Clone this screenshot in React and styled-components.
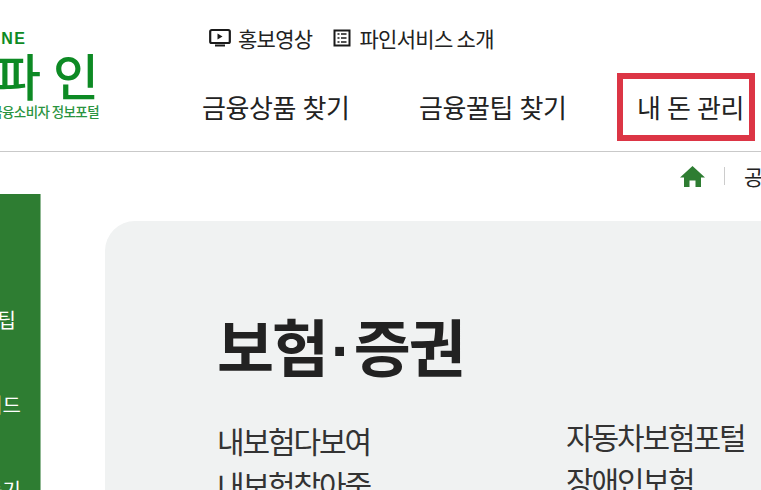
import React from 'react';
import styled, { createGlobalStyle } from 'styled-components';

const GlobalStyle = createGlobalStyle`
  html, body {
    margin: 0;
    height: 100%;
    overflow: hidden;
    background: #fff;
    font-family: "Noto Sans CJK KR", "Noto Sans", sans-serif;
  }
`;

const Page = styled.div`
  width: 761px;
  height: 490px;
  overflow: hidden;
`;

const Header = styled.header`
  display: flex;
  box-sizing: border-box;
  height: 152px;
  border-bottom: 1px solid #c9c9c9;
`;

const Logo = styled.div`
  flex: none;
  width: 139px;
  margin-left: -40px;
  box-sizing: border-box;
  padding-top: 31px;
  display: flex;
  flex-direction: column;
  align-items: flex-end;
  color: #0d8a24;
  white-space: nowrap;
`;

const LogoFine = styled.span`
  align-self: flex-start;
  margin-left: 24px;
  font: 700 16px/16px "Liberation Sans", sans-serif;
  letter-spacing: 1.5px;
`;

const LogoName = styled.span`
  font-size: 50px;
  font-weight: 500;
  line-height: 54px;
  letter-spacing: 12px;
  margin-right: -12px;
`;

const LogoTag = styled.span`
  font-size: 13.5px;
  font-weight: 500;
  line-height: 14px;
  letter-spacing: -0.6px;
  margin-top: 3px;
  color: #2a9440;
`;

const HeaderMain = styled.div`
  margin-left: 110px;
  display: flex;
  flex-direction: column;
`;

const UtilRow = styled.div`
  display: flex;
  gap: 21px;
  padding-top: 27px;
  height: 73px;
  box-sizing: border-box;
`;

const UtilLink = styled.a`
  display: flex;
  align-items: center;
  gap: ${(p) => p.$gap}px;
  height: 22px;
  font-size: 21px;
  letter-spacing: -0.7px;
  color: #222;
  white-space: nowrap;
`;

const Nav = styled.nav`
  display: flex;
  align-items: center;
  margin-left: -14px;
  height: 68px;
`;

const NavItem = styled.a`
  flex: none;
  box-sizing: border-box;
  display: flex;
  align-items: center;
  height: 68px;
  padding-left: ${(p) => p.$pad}px;
  padding-bottom: 2px;
  width: ${(p) => p.$width}px;
  font-size: 26px;
  letter-spacing: -0.4px;
  word-spacing: 1px;
  color: #222;
  white-space: nowrap;
  border: ${(p) => (p.$active ? '6px solid #dc3545' : 'none')};
`;

const Crumbs = styled.div`
  display: flex;
  justify-content: flex-end;
  align-items: center;
  box-sizing: border-box;
  height: 42px;
  padding-top: 6px;
  margin-right: -20px;
  gap: 19px;
`;

const Divider = styled.span`
  width: 1px;
  height: 18px;
  background: #ccc;
`;

const CrumbText = styled.span`
  width: 37px;
  font-size: 21px;
  color: #222;
  white-space: nowrap;
`;

const Body = styled.div`
  display: flex;
`;

const Sidebar = styled.aside`
  flex: none;
  box-sizing: border-box;
  width: 41px;
  height: 296px;
  background: #2e7d32;
  border-right: 1px solid #8fb892;
  padding-top: 112px;
  display: flex;
  flex-direction: column;
  align-items: flex-end;
  overflow: hidden;
`;

const SideItem = styled.span`
  flex: none;
  height: 85px;
  margin-right: ${(p) => p.$right}px;
  font-size: 20px;
  line-height: 28px;
  color: #fff;
  white-space: nowrap;
`;

const Content = styled.main`
  flex: none;
  width: 700px;
  height: 300px;
  margin: 27px 0 0 64px;
  box-sizing: border-box;
  padding: 86px 0 0 112px;
  background: #f0f2f2;
  border-radius: 30px 0 0 0;
`;

const Title = styled.h2`
  margin: 0;
  font-size: 62px;
  line-height: 76px;
  font-weight: 700;
  letter-spacing: -2px;
  color: #222;
`;

const TitleDot = styled.span`
  font-family: "Liberation Sans", sans-serif;
  margin: 0 4px;
`;

const Links = styled.div`
  display: grid;
  grid-template-columns: 349px 1fr;
  margin-top: 25px;
`;

const LinkColumn = styled.ul`
  list-style: none;
  margin: ${(p) => p.$offset}px 0 0;
  padding: 0;
`;

const LinkItem = styled.li`
  height: 44px;
  font-size: 30px;
  line-height: 44px;
  letter-spacing: -2.1px;
  color: #333;
  white-space: nowrap;
`;

function PlayIcon() {
  return (
    <svg width="22" height="20" viewBox="0 0 22 20">
      <rect x="1.200" y="2" width="19.600" height="13" rx="1.500" fill="none" stroke="#1a1a1a" strokeWidth="2.200" />
      <path d="M8.500 5.500v6l5-3z" fill="#1a1a1a" />
      <rect x="6" y="16.500" width="10" height="2" fill="#1a1a1a" />
    </svg>
  );
}

function ListIcon() {
  return (
    <svg width="18" height="18" viewBox="0 0 18 18">
      <rect x="1.500" y="1.500" width="15" height="15" fill="none" stroke="#1a1a1a" strokeWidth="2" />
      <path d="M4.500 5h2M8 5h5.500M4.500 9h2M8 9h5.500M4.500 13h2M8 13h5.500" stroke="#1a1a1a" strokeWidth="1.600" />
    </svg>
  );
}

function HomeIcon() {
  return (
    <svg width="25" height="21" viewBox="0 0 25 21">
      <path d="M12.500 0L25 11.500h-4V21h-5.500v-6.500h-6V21H4v-9.500H0z" fill="#2e7d32" />
    </svg>
  );
}

export default function App() {
  return (
    <Page>
      <GlobalStyle />
      <Header>
        <Logo>
          <LogoFine>FINE</LogoFine>
          <LogoName>파인</LogoName>
          <LogoTag>금융소비자 정보포털</LogoTag>
        </Logo>
        <HeaderMain>
          <UtilRow>
            <UtilLink $gap={7}><PlayIcon />홍보영상</UtilLink>
            <UtilLink $gap={8}><ListIcon />파인서비스 소개</UtilLink>
          </UtilRow>
          <Nav>
            <NavItem $width={217} $pad={7}>금융상품 찾기</NavItem>
            <NavItem $width={205} $pad={7}>금융꿀팁 찾기</NavItem>
            <NavItem $active $width={138} $pad={14}>내 돈 관리</NavItem>
          </Nav>
        </HeaderMain>
      </Header>
      <Crumbs>
        <HomeIcon />
        <Divider />
        <CrumbText>공시</CrumbText>
      </Crumbs>
      <Body>
        <Sidebar>
          <SideItem $right={24}>금융꿀팁</SideItem>
          <SideItem $right={19}>금융가이드</SideItem>
          <SideItem $right={19}>금융교육 듣기</SideItem>
        </Sidebar>
        <Content>
          <Title>보험<TitleDot>·</TitleDot>증권</Title>
          <Links>
            <LinkColumn $offset={4}>
              <LinkItem>내보험다보여</LinkItem>
              <LinkItem>내보험찾아줌</LinkItem>
            </LinkColumn>
            <LinkColumn $offset={0}>
              <LinkItem>자동차보험포털</LinkItem>
              <LinkItem>장애인보험</LinkItem>
            </LinkColumn>
          </Links>
        </Content>
      </Body>
    </Page>
  );
}
